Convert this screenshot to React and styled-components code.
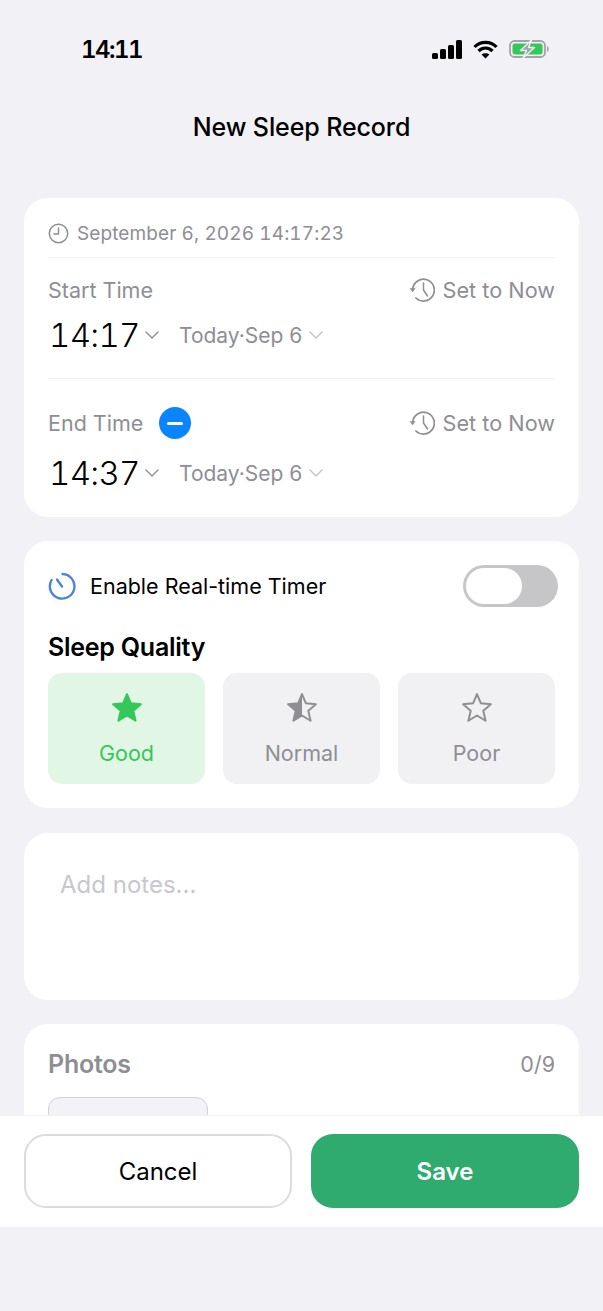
import React from 'react';
import styled, { createGlobalStyle } from 'styled-components';

const GlobalStyle = createGlobalStyle`
  html, body {
    margin: 0;
    padding: 0;
    background: #f1f1f6;
    font-family: Inter, "Liberation Sans", sans-serif;
  }
`;

const Page = styled.div`
  width: 603px;
  height: 1311px;
  overflow: hidden;
  background: #f1f1f6;
  color: #000;
`;

const Body = styled.div`
  height: 1115px;
  overflow: hidden;
`;

const StatusBar = styled.div`
  height: 98px;
  display: flex;
  align-items: center;
  justify-content: space-between;
  padding: 0 54px 0 81px;
  box-sizing: border-box;
`;

const Clock = styled.span`
  font-size: 24px;
  font-weight: 600;
  font-variant-numeric: tabular-nums;
  letter-spacing: -1.5px;
`;

const StatusIcons = styled.div`
  display: flex;
  align-items: center;
  gap: 11px;
`;

const Title = styled.h1`
  margin: 0 0 42px;
  height: 58px;
  line-height: 58px;
  text-align: center;
  font-size: 25px;
  font-weight: 500;
  letter-spacing: -0.1px;
`;

const Cards = styled.div`
  display: flex;
  flex-direction: column;
  gap: 24.4px;
  padding: 0 24px;
`;

const Card = styled.section`
  background: #fff;
  border-radius: 24px;
  padding: ${({ $padding }) => $padding || '0 24px'};
  min-height: ${({ $minHeight }) => $minHeight || 0};
  box-sizing: border-box;
`;

const DateRow = styled.div`
  height: 60px;
  display: flex;
  align-items: center;
  gap: 8px;
  border-bottom: 1px solid #f2f2f5;
  box-sizing: border-box;
  padding-top: 11px;
  font-size: 19px;
  font-variant-numeric: tabular-nums;
  letter-spacing: 0.1px;
  color: #8e8e93;
`;

const TimeBlock = styled.div`
  padding: ${({ $end }) => ($end ? '28px 0 24px' : '16px 0 23px')};
  border-bottom: ${({ $end }) => ($end ? 'none' : '1px solid #f2f2f5')};
`;

const LabelRow = styled.div`
  height: 32px;
  display: flex;
  align-items: center;
  justify-content: space-between;
`;

const LabelGroup = styled.div`
  display: flex;
  align-items: center;
  gap: 16px;
`;

const Label = styled.span`
  font-size: 21.5px;
  color: #8e8e93;
`;

const SetNow = styled.div`
  display: flex;
  align-items: center;
  gap: 8px;
  font-size: 21.7px;
  color: #8e8e93;
`;

const MinusButton = styled.span`
  width: 32px;
  height: 32px;
  border-radius: 50%;
  background: #0a84ff;
  display: flex;
  align-items: center;
  justify-content: center;

  &::after {
    content: '';
    width: 16px;
    height: 3px;
    border-radius: 2px;
    background: #fff;
  }
`;

const TimeRow = styled.div`
  height: 40px;
  margin-top: ${({ $end }) => ($end ? '14px' : '9px')};
  display: flex;
  align-items: center;
`;

const TimeValue = styled.span`
  font-size: 33px;
  font-weight: 300;
  font-variant-numeric: tabular-nums;
  letter-spacing: -0.7px;
  margin-left: 1px;
  width: 88px;
`;

const DateValue = styled.span`
  font-size: 21px;
  color: #8e8e93;
  margin-left: 20px;
`;

const Chevron = styled.svg`
  width: 14px;
  height: 8px;
  margin-left: ${({ $light }) => ($light ? '7px' : '8px')};
  fill: none;
  stroke: ${({ $light }) => ($light ? '#c4c4c8' : '#8e8e93')};
  stroke-width: 1.4;
  stroke-linecap: round;
  stroke-linejoin: round;
`;

const TimerRow = styled.div`
  height: 42px;
  display: flex;
  align-items: center;
  margin-right: -3px;
`;

const TimerLabel = styled.span`
  flex: 1;
  margin-left: 14px;
  font-size: 21.5px;
`;

const Toggle = styled.div`
  width: 95px;
  height: 42px;
  border-radius: 21px;
  background: #c6c6c8;
  padding: 3px;
  box-sizing: border-box;
`;

const ToggleThumb = styled.div`
  width: 56px;
  height: 36px;
  border-radius: 18px;
  background: #fff;
`;

const SectionTitle = styled.h2`
  margin: 25px 0 11px;
  height: 30px;
  line-height: 30px;
  font-size: 25px;
  font-weight: 600;
  letter-spacing: -0.25px;
`;

const QualityGrid = styled.div`
  display: grid;
  grid-template-columns: repeat(3, 157px);
  gap: 18px;
`;

const QualityOption = styled.div`
  height: 111px;
  border-radius: 14px;
  background: ${({ $active }) => ($active ? '#e2f6e6' : '#f1f1f3')};
  color: ${({ $active }) => ($active ? '#34c759' : '#8e8e93')};
  display: flex;
  flex-direction: column;
  align-items: center;
  padding-top: 20px;
  box-sizing: border-box;
  font-size: 21.5px;
`;

const QualityLabel = styled.span`
  margin-top: 15px;
  line-height: 30px;
`;

const NotesPlaceholder = styled.div`
  font-size: 24px;
  color: #c7c7cc;
`;

const PhotosHeader = styled.div`
  display: flex;
  align-items: center;
  justify-content: space-between;
  height: 30px;
  margin-bottom: 18px;
`;

const PhotosTitle = styled.span`
  font-size: 25px;
  font-weight: 600;
  color: #8e8e93;
  letter-spacing: -0.25px;
`;

const PhotosCount = styled.span`
  font-size: 21.5px;
  color: #8e8e93;
`;

const PhotoSlot = styled.div`
  width: 160px;
  height: 160px;
  border: 1.5px solid #d1d1d6;
  border-radius: 12px;
  background: #f2f2f7;
  box-sizing: border-box;
`;

const Footer = styled.footer`
  height: 112px;
  background: #fff;
  border-top: 1px solid #f2f2f5;
  box-sizing: border-box;
  padding: 18px 24px 0;
  display: grid;
  grid-template-columns: 268px 268px;
  justify-content: space-between;
  align-items: start;
`;

const Button = styled.button`
  height: 74px;
  border-radius: 22px;
  font-family: inherit;
  font-size: 24px;
  font-weight: ${({ $primary }) => ($primary ? 600 : 400)};
  color: ${({ $primary }) => ($primary ? '#fff' : '#000')};
  background: ${({ $primary }) => ($primary ? '#30ab6f' : '#fff')};
  border: ${({ $primary }) => ($primary ? 'none' : '2px solid #dcdce0')};
  box-sizing: border-box;
`;

const SignalIcon = () => (
  <svg width="30" height="19" viewBox="0 0 30 19" fill="#000">
    <rect x="0" y="13" width="6" height="6" rx="1.5" />
    <rect x="8" y="9" width="6" height="10" rx="1.5" />
    <rect x="16" y="5" width="6" height="14" rx="1.5" />
    <rect x="24" y="0" width="6" height="19" rx="1.5" />
  </svg>
);

const WifiIcon = () => (
  <svg width="25" height="19" viewBox="0 0 25 19" fill="none" stroke="#000" strokeWidth="3.2">
    <path d="M1.5 7 C7.5 .8 17.5 .8 23.5 7" />
    <path d="M5.5 11 C9.5 7 15.5 7 19.5 11" />
    <path d="M12.5 18.5 L8.6 14.6 C10.8 12.8 14.2 12.8 16.4 14.6 Z" fill="#000" stroke="none" />
  </svg>
);

const BatteryIcon = () => (
  <svg width="40" height="18" viewBox="0 0 40 18">
    <rect x="1" y="1" width="35" height="16" rx="4.5" fill="none" stroke="#a4a4a8" strokeWidth="1.8" />
    <rect x="3.5" y="3.5" width="30" height="11" rx="2.5" fill="#34c759" />
    <path d="M38 6 C39.2 6.5 39.7 7.5 39.7 9 C39.7 10.5 39.2 11.5 38 12 Z" fill="#a4a4a8" />
    <path d="M22.5 0 L11.5 10.5 H17.5 L14 18 L25.5 7.5 H19.5 Z" fill="#a4a4a8" stroke="#f1f1f6" strokeWidth="1.4" strokeLinejoin="round" />
  </svg>
);

const ClockIcon = () => (
  <svg width="21" height="21" viewBox="0 0 21 21" fill="none" stroke="#8e8e93" strokeWidth="1.5" strokeLinecap="round" strokeLinejoin="round">
    <circle cx="10.5" cy="10.5" r="9.2" />
    <path d="M10.5 5 V11 H6" />
  </svg>
);

const ClockArrowIcon = () => (
  <svg width="26" height="26" viewBox="0 0 26 26" fill="none" stroke="#8e8e93" strokeWidth="1.7" strokeLinecap="round" strokeLinejoin="round">
    <path d="M3.6 12 A10.9 10.9 0 1 1 6.9 21" />
    <path d="M14.5 6 V13 L18.5 19" strokeWidth="1.5" />
    <path d="M0.6 11.2 H6.6 L3.6 15.2 Z" fill="#8e8e93" stroke="none" />
  </svg>
);

const TimerIcon = () => (
  <svg width="28" height="28" viewBox="0 0 28 28" fill="none" stroke="#4f82d9" strokeWidth="2.4" strokeLinecap="round">
    <path d="M14.5 2 A12.3 12.3 0 1 1 3.6 8" />
    <path d="M14 14.5 L9 7.5" />
  </svg>
);

const STAR = 'M15 2.5 L18.6 11 L27.8 11.8 L20.8 17.9 L22.9 27 L15 22.2 L7.1 27 L9.2 17.9 L2.2 11.8 L11.4 11 Z';

const StarIcon = ({ kind, color }) => (
  <svg width="30" height="30" viewBox="1.2 1.5 27.6 27.6" strokeLinejoin="round" strokeWidth="1.8">
    <defs>
      <clipPath id="star-left">
        <rect x="0" y="0" width="15" height="30" />
      </clipPath>
    </defs>
    {kind === 'half' && <path d={STAR} fill={color} clipPath="url(#star-left)" />}
    <path d={STAR} fill={kind === 'full' ? color : 'none'} stroke={color} />
  </svg>
);

const TimeSection = ({ end, label, time }) => (
  <TimeBlock $end={end}>
    <LabelRow>
      <LabelGroup>
        <Label>{label}</Label>
        {end && <MinusButton />}
      </LabelGroup>
      <SetNow>
        <ClockArrowIcon />
        Set to Now
      </SetNow>
    </LabelRow>
    <TimeRow $end={end}>
      <TimeValue>{time}</TimeValue>
      <Chevron viewBox="0 0 14 8">
        <path d="M1 1 L7 7 L13 1" />
      </Chevron>
      <DateValue>Today·Sep 6</DateValue>
      <Chevron viewBox="0 0 14 8" $light>
        <path d="M1 1 L7 7 L13 1" />
      </Chevron>
    </TimeRow>
  </TimeBlock>
);

const QUALITY = [
  { label: 'Good', kind: 'full', active: true },
  { label: 'Normal', kind: 'half' },
  { label: 'Poor', kind: 'empty' },
];

export default function App() {
  return (
    <Page>
      <GlobalStyle />
      <Body>
        <StatusBar>
          <Clock>14:11</Clock>
          <StatusIcons>
            <SignalIcon />
            <WifiIcon />
            <BatteryIcon />
          </StatusIcons>
        </StatusBar>
        <Title>New Sleep Record</Title>
        <Cards>
          <Card>
            <DateRow>
              <ClockIcon />
              September 6, 2026 14:17:23
            </DateRow>
            <TimeSection label="Start Time" time="14:17" />
            <TimeSection end label="End Time" time="14:37" />
          </Card>
          <Card $padding="24px">
            <TimerRow>
              <TimerIcon />
              <TimerLabel>Enable Real-time Timer</TimerLabel>
              <Toggle>
                <ToggleThumb />
              </Toggle>
            </TimerRow>
            <SectionTitle>Sleep Quality</SectionTitle>
            <QualityGrid>
              {QUALITY.map((q) => (
                <QualityOption key={q.label} $active={q.active}>
                  <StarIcon kind={q.kind} color={q.active ? '#34c759' : '#8e8e93'} />
                  <QualityLabel>{q.label}</QualityLabel>
                </QualityOption>
              ))}
            </QualityGrid>
          </Card>
          <Card $padding="37px 36px" $minHeight="167px">
            <NotesPlaceholder>Add notes...</NotesPlaceholder>
          </Card>
          <Card $padding="25px 24px">
            <PhotosHeader>
              <PhotosTitle>Photos</PhotosTitle>
              <PhotosCount>0/9</PhotosCount>
            </PhotosHeader>
            <PhotoSlot />
          </Card>
        </Cards>
      </Body>
      <Footer>
        <Button>Cancel</Button>
        <Button $primary>Save</Button>
      </Footer>
    </Page>
  );
}
